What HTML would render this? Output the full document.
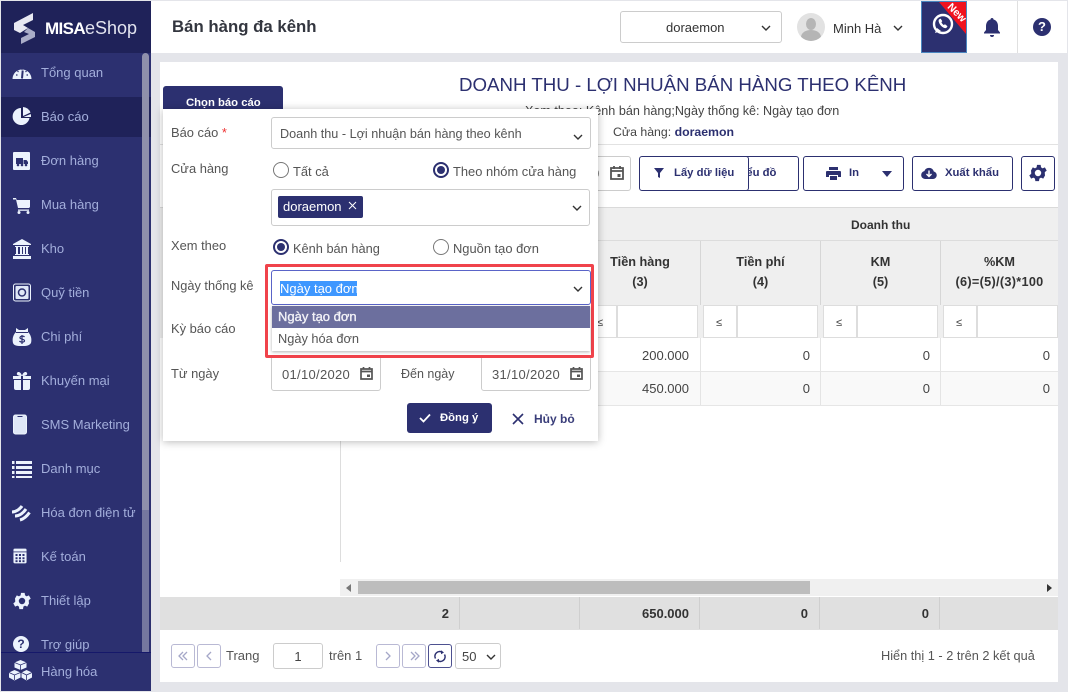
<!DOCTYPE html>
<html><head><meta charset="utf-8">
<style>
*{box-sizing:border-box}
html,body{margin:0;padding:0}
body{width:1068px;height:692px;overflow:hidden;position:relative;background:#e4e5ea;font-family:"Liberation Sans","Noto Sans CJK JP",sans-serif;font-size:13px;color:#444}
.a{position:absolute}
.t{position:absolute;white-space:nowrap;line-height:16px}
.m{position:absolute;left:41px;color:#a3aedb;font-size:13px;line-height:16px;white-space:nowrap}
.ic{position:absolute;left:11px;width:22px;height:22px}
.box{position:absolute;border:1px solid #ccc;border-radius:3px;background:#fff}
.btn{position:absolute;border:1px solid #2c3070;border-radius:3px;background:#fff;color:#2c3070;font-weight:bold;font-size:11.3px;height:35px;line-height:33px;white-space:nowrap}
.hc{position:absolute;top:241px;height:64px;border-right:1px solid #d6d6d6;text-align:center;font-weight:bold;font-size:12.7px;color:#333;line-height:20px;padding-top:11px}
.f{position:absolute;top:305px;height:33px;background:#fff;border:1px solid #ddd}
.n{position:absolute;text-align:right;font-size:13px;color:#444;line-height:16px}
.pg{position:absolute;top:644px;width:24px;height:24px;border:1px solid #b9b9d4;border-radius:3px;background:#fff}
.vl{position:absolute;width:1px;background:#e4e4e4}
.rd{position:absolute;width:16px;height:16px;border-radius:50%;border:1.500px solid #777;background:#fff}
.rd.on{border:2px solid #2c3070}
.rd.on:after{content:"";position:absolute;left:2px;top:2px;width:8px;height:8px;border-radius:50%;background:#2c3070}
.lb{position:absolute;white-space:nowrap;font-size:12.9px;line-height:16px;color:#555}
.dt{letter-spacing:.3px}
</style></head><body>

<!-- header -->
<div class="a" style="left:1px;top:1px;width:1066px;height:52px;background:#fff"></div>
<div class="t" style="left:172px;top:17px;font-size:16.800px;line-height:20px;font-weight:bold;color:#33363f">Bán hàng đa kênh</div>
<div class="box" style="left:620px;top:11px;width:162px;height:32px"></div>
<div class="t" style="left:666px;top:20px;color:#333">doraemon</div>
<svg class="a" style="left:761px;top:25px" width="10" height="6"><path d="M1 1l4 4 4-4" fill="none" stroke="#333" stroke-width="1.400"/></svg>
<div class="a" style="left:797px;top:13px;width:28px;height:28px;border-radius:50%;background:#e2e2e2;overflow:hidden"><div class="a" style="left:9px;top:5px;width:10px;height:12px;border-radius:50%;background:#b5b5b5"></div><div class="a" style="left:4px;top:17px;width:20px;height:14px;border-radius:50%;background:#b5b5b5"></div></div>
<div class="t" style="left:833px;top:21px;color:#333">Minh Hà</div>
<svg class="a" style="left:893px;top:25px" width="10" height="6"><path d="M1 1l4 4 4-4" fill="none" stroke="#333" stroke-width="1.400"/></svg>
<div class="a" style="left:921px;top:1px;width:46px;height:52px;background:#2c3070;border:1px solid #4a86c0;overflow:hidden">
<svg class="a" style="left:0;top:0" width="44" height="50"><path d="M17 0H44V32Z" fill="#f0121e"/>
<circle cx="21" cy="22" r="9" fill="none" stroke="#fff" stroke-width="2.400"/><path d="M17 17.500c-1 1 0 4 2 6.200s4.500 3 5.500 2l1-1.500-2.500-2-1.200.8c-1-.5-2-1.700-2.400-2.700l.9-1.200-1.700-2.500z" fill="#fff"/><path d="M13 31l2-5 4 3z" fill="#fff"/>
<text x="0" y="0" transform="translate(32.500 13) rotate(45)" font-family="Liberation Sans" font-size="10.500" font-weight="bold" fill="#fff" text-anchor="middle">New</text></svg>
</div>
<svg class="a" style="left:983px;top:17px" width="18" height="20"><path d="M9 1c1 0 1.500.7 1.500 1.500C13.500 3.300 15 6 15 9v4l2 2.500v1H1v-1L3 13V9c0-3 1.500-5.700 4.500-6.500C7.500 1.700 8 1 9 1z" fill="#2c3070"/><path d="M7 18h4a2 2 0 0 1-4 0z" fill="#2c3070"/></svg>
<div class="a" style="left:1017px;top:1px;width:1px;height:52px;background:#e0e0e0"></div>
<div class="a" style="left:1033px;top:18px;width:18px;height:18px;border-radius:50%;background:#2c3070;color:#fff;font-weight:bold;font-size:13px;line-height:18px;text-align:center">?</div>

<!-- sidebar -->
<div class="a" style="left:1px;top:1px;width:150px;height:690px;background:#2c3070"></div>
<div class="a" style="left:1px;top:1px;width:150px;height:52px;background:#1f2259"></div>
<div class="a" style="left:1px;top:97px;width:150px;height:40px;background:#1f2259"></div>
<svg class="a" style="left:13px;top:11px" width="126" height="36">
<path d="M1 12L20 2V9L10 14 15 17 7 22 1 19Z" fill="#e8e9f2"/>
<path d="M15 17l7 4v5L8 33v-6l8-4-5-2z" fill="#aaadc8"/>
<text x="32" y="23" font-family="Liberation Sans" font-size="17" font-weight="bold" fill="#fff" letter-spacing="-.6">MISA</text>
<text x="72" y="23" font-family="Liberation Sans" font-size="18" fill="#e3e4ef">eShop</text></svg>

<svg class="ic" style="top:61px" viewBox="0 0 22 22"><path d="M1.500 18a9.500 9.500 0 1 1 19 0z" fill="#ecf3fd"/><path d="M11 17.500l.7-8" stroke="#2c3070" stroke-width="2"/><path d="M5 14h1.500M6.500 10l1 1M11 7.500v1.300M15.500 10l-1 1M15.500 14H17" stroke="#2c3070" stroke-width="1.200"/></svg>
<div class="m" style="top:65px">Tổng quan</div>
<svg class="ic" style="top:105px" viewBox="0 0 22 22"><path d="M10 3a8.500 8.500 0 1 0 8.500 10H10z" fill="#ecf3fd"/><path d="M12 2a8.500 8.500 0 0 1 7.500 5.500L12 11z" fill="#ecf3fd"/><path d="M12.500 12l7.200-3a8 8 0 0 1 .3 3z" fill="#ecf3fd"/></svg>
<div class="m" style="top:109px">Báo cáo</div>
<svg class="ic" style="top:150px" viewBox="0 0 22 22"><rect x="2" y="2" width="17" height="18" rx="1" fill="#ecf3fd"/><path d="M5 8h7v6H5zM12.500 10h3l1.500 2v2h-4.500z" fill="#2c3070"/><circle cx="7" cy="15" r="1.300" fill="#2c3070"/><circle cx="11" cy="15" r="1.300" fill="#2c3070"/><circle cx="15" cy="15" r="1.300" fill="#2c3070"/></svg>
<div class="m" style="top:153px">Đơn hàng</div>
<svg class="ic" style="top:194px" viewBox="0 0 22 22"><path d="M2 4h3l.7 2H19v7l-1 1H7L5 5.500H2z" fill="#ecf3fd"/><path d="M7 15.500h11v1.300H7z" fill="#ecf3fd"/><circle cx="8" cy="18.500" r="1.500" fill="#ecf3fd"/><circle cx="17" cy="18.500" r="1.500" fill="#ecf3fd"/></svg>
<div class="m" style="top:197px">Mua hàng</div>
<svg class="ic" style="top:238px" viewBox="0 0 22 22"><path d="M11 1l9 5v1H2V6zM2 18h18v3H2zM4 16h14v1H4zM4 8h14v1H4zM5 9h2v7H5zM9 9h2v7H9zM12 9h2v7h-2zM15 9h2v7h-2z" fill="#ecf3fd"/></svg>
<div class="m" style="top:241px">Kho</div>
<svg class="ic" style="top:282px" viewBox="0 0 22 22"><rect x="2.500" y="2" width="17" height="17" rx="2" fill="none" stroke="#ecf3fd" stroke-width="1"/><rect x="4.500" y="4" width="13" height="13" rx="1" fill="#dfe7f7"/><circle cx="11" cy="10.500" r="3.500" fill="none" stroke="#2c3070" stroke-width="1.500"/></svg>
<div class="m" style="top:285px">Quỹ tiền</div>
<svg class="ic" style="top:326px" viewBox="0 0 22 22"><path d="M5 2l3 2h6l3-2 0 4c3 3 4 7 3 11-2 3-5 3-9 3s-8 0-9-3C1 13 2 9 5 6z" fill="#ecf3fd"/><path d="M5 6.500h12" stroke="#2c3070"/><path d="M11 9v9M13.500 11c-1-1.500-5-1-4.500 1 .4 1.500 5 1 4.500 3-.4 1.500-4 1.500-5 0" fill="none" stroke="#2c3070" stroke-width="1.200"/></svg>
<div class="m" style="top:329px">Chi phí</div>
<svg class="ic" style="top:370px" viewBox="0 0 22 22"><path d="M3 10h7v10H5a2 2 0 0 1-2-2zM12 10h7v8a2 2 0 0 1-2 2h-5zM2 6h8v3H2zM12 6h8v3h-8z" fill="#ecf3fd"/><path d="M11 6C8 6 5 5 6 3s4-1 5 3c1-4 4-5 5-3s-2 3-5 3z" fill="#ecf3fd"/></svg>
<div class="m" style="top:373px">Khuyến mại</div>
<svg class="ic" style="top:414px" viewBox="0 0 22 22"><rect x="2.500" y="1" width="13" height="19" rx="2" fill="#dfe7f7" stroke="#ecf3fd"/><path d="M6.500 2.500h5" stroke="#2c3070"/></svg>
<div class="m" style="top:417px">SMS Marketing</div>
<svg class="ic" style="top:458px" viewBox="0 0 22 22"><path d="M1 3h2.500v3H1zM5 3h16v3H5zM1 8h2.500v3H1zM5 8h16v3H5zM1 13h2.500v3H1zM5 13h16v3H5zM1 18h2.500v2H1zM5 18h16v2H5z" fill="#ecf3fd"/></svg>
<div class="m" style="top:461px">Danh mục</div>
<svg class="ic" style="top:502px" viewBox="0 0 22 22"><path d="M1 10C5 10 9 7 11 4M4 14C9 14 13 10 15 7M9 18C13 17 16 14 18.500 10.500" fill="none" stroke="#ecf3fd" stroke-width="3"/></svg>
<div class="m" style="top:505px">Hóa đơn điện tử</div>
<svg class="ic" style="top:547px;width:18px;height:18px" viewBox="0 0 22 22"><rect x="3" y="2" width="16" height="18" rx="1.500" fill="#ecf3fd"/><path d="M3 6h16" stroke="#2c3070"/><path d="M5.500 8.500h2.500v2.500H5.500zM9.700 8.500h2.500v2.500H9.700zM14 8.500h2.500v2.500H14zM5.500 12.500h2.500v2.500H5.500zM9.700 12.500h2.500v2.500H9.700zM14 12.500h2.500v2.500H14zM5.500 16.200h2.500v2.300H5.500zM9.700 16.200h2.500v2.300H9.700zM14 16.200h2.500v2.300H14z" fill="#2c3070"/></svg>
<div class="m" style="top:549px">Kế toán</div>
<svg class="ic" style="top:590px" viewBox="0 0 24 24"><path fill="#ecf3fd" d="M19.400 13a7.500 7.500 0 0 0 0-2l2.100-1.600-2-3.500-2.500 1a7.500 7.500 0 0 0-1.700-1l-.4-2.700h-4l-.4 2.700a7.500 7.500 0 0 0-1.700 1l-2.500-1-2 3.500L4.600 11a7.500 7.500 0 0 0 0 2l-2.100 1.600 2 3.500 2.500-1c.5.400 1.100.7 1.700 1l.4 2.700h4l.4-2.700c.6-.3 1.200-.6 1.700-1l2.500 1 2-3.500zM12 15.500a3.500 3.500 0 1 1 0-7 3.500 3.500 0 0 1 0 7z"/></svg>
<div class="m" style="top:593px">Thiết lập</div>
<div class="a" style="left:13px;top:636px;width:16px;height:16px;border-radius:50%;background:#ecf3fd;color:#2c3070;font-weight:bold;font-size:12px;line-height:16px;text-align:center">?</div>
<div class="m" style="top:637px">Trợ giúp</div>
<div class="a" style="left:1px;top:652px;width:150px;height:39px;background:#2c3070;border-top:1px solid #15186a"></div>
<svg class="a" style="left:9px;top:659px" width="23" height="23" viewBox="0 0 23 23"><path d="M11.500 1l6 2.500v5l-6 2.500-6-2.500v-5zM5.500 11l6 2.500v5l-6 3-5.500-3v-5zM17.500 11l5.500 2.500v5l-5.500 3-5-3v-5z" fill="#ecf3fd"/><path d="M5.500 3.500l6 2.500 6-2.500M0 13.500l5.500 2.500 6-2.500M12.500 13.500l5 2.500 5.500-2.500M11.500 6v5M5.500 16v5M17.500 16v5" stroke="#2c3070" stroke-width=".8" fill="none"/></svg>
<div class="m" style="top:664px">Hàng hóa</div>
<div class="a" style="left:142px;top:53px;width:7px;height:599px;background:#8f90ab;border-radius:4px 4px 0 0"></div>
<div class="a" style="left:142px;top:510px;width:7px;height:142px;background:#75779f"></div>

<!-- card -->
<div class="a" style="left:160px;top:62px;width:898px;height:620px;background:#fff"></div>
<div class="a" style="left:163px;top:86px;width:120px;height:30px;background:#2c3070;border-radius:3px"></div>
<div class="t" style="left:186px;top:95px;font-size:11.300px;font-weight:bold;color:#fff">Chọn báo cáo</div>
<div class="t" style="left:459px;top:74px;font-size:18.700px;line-height:22px;color:#2c3070">DOANH THU - LỢI NHUẬN BÁN HÀNG THEO KÊNH</div>
<div class="t" style="left:525px;top:103px;font-size:12.600px;color:#444">Xem theo: Kênh bán hàng;Ngày thống kê: Ngày tạo đơn</div>
<div class="t" style="left:613px;top:124px;font-size:12.300px;color:#444">Cửa hàng: <b style="color:#2c3070">doraemon</b></div>
<div class="a" style="left:160px;top:144px;width:898px;height:1px;background:#e2e2e2"></div>

<!-- toolbar -->
<div class="box" style="left:560px;top:156px;width:71px;height:35px"></div>
<div class="t dt" style="left:592px;top:166px;color:#555">0</div>
<svg class="a" style="left:610px;top:165px" width="14" height="15"><path d="M1 3h12v11H1zM1 6h12M4 1v3M10 1v3" fill="none" stroke="#555" stroke-width="1.800"/><rect x="7.500" y="9" width="3" height="3" fill="#555"/></svg>
<div class="btn" style="left:720px;top:156px;width:79px"></div>
<div class="t" style="left:735px;top:165px;font-size:11.300px;font-weight:bold;color:#2c3070">Biểu đồ</div>
<div class="btn" style="left:639px;top:156px;width:110px;padding-left:34px">Lấy dữ liệu</div>
<svg class="a" style="left:654px;top:168px" width="10" height="11"><path d="M0 0h10L6 5v5L4 9V5z" fill="#2c3070"/></svg>
<div class="btn" style="left:803px;top:156px;width:101px;padding-left:45px">In</div>
<svg class="a" style="left:826px;top:167px" width="15" height="14"><path d="M3 0h9v3H3zM1 4h13a1 1 0 0 1 1 1v5h-3V8H3v2H0V5a1 1 0 0 1 1-1zM4 9h7v4H4z" fill="#2c3070"/></svg>
<svg class="a" style="left:882px;top:171px" width="10" height="6"><path d="M0 0h10L5 6z" fill="#2c3070"/></svg>
<div class="btn" style="left:912px;top:156px;width:101px;padding-left:32px">Xuất khẩu</div>
<svg class="a" style="left:921px;top:167px" width="16" height="12"><path d="M4 12a4 4 0 0 1-.7-7.900A5 5 0 0 1 12.800 4.500 3.800 3.800 0 0 1 12 12z" fill="#2c3070"/><path d="M8 3.500V9M5.500 7L8 9.500 10.500 7" stroke="#fff" stroke-width="1.400" fill="none"/></svg>
<div class="btn" style="left:1021px;top:156px;width:34px"></div>
<svg class="a" style="left:1027px;top:162px" width="22" height="22" viewBox="0 0 24 24"><path fill="#2c3070" d="M19.400 13a7.500 7.500 0 0 0 0-2l2.100-1.600-2-3.500-2.500 1a7.500 7.500 0 0 0-1.700-1l-.4-2.700h-4l-.4 2.700a7.500 7.500 0 0 0-1.700 1l-2.500-1-2 3.500L4.600 11a7.500 7.500 0 0 0 0 2l-2.100 1.600 2 3.500 2.500-1c.5.400 1.100.7 1.700 1l.4 2.700h4l.4-2.700c.6-.3 1.200-.6 1.700-1l2.500 1 2-3.500zM12 15.500a3.500 3.500 0 1 1 0-7 3.500 3.500 0 0 1 0 7z"/></svg>

<!-- table -->
<div class="a" style="left:160px;top:207px;width:898px;height:98px;background:#efefef;border-top:1px solid #dadada"></div>
<div class="a" style="left:580px;top:240px;width:478px;height:1px;background:#dcdcdc"></div>
<div class="t" style="left:851px;top:217px;font-size:12px;font-weight:bold;color:#333">Doanh thu</div>
<div class="hc" style="left:580px;width:121px">Tiền hàng<br>(3)</div>
<div class="hc" style="left:701px;width:120px">Tiền phí<br>(4)</div>
<div class="hc" style="left:821px;width:120px">KM<br>(5)</div>
<div class="hc" style="left:941px;width:117px;border-right:0">%KM<br><span style="letter-spacing:.3px">(6)=(5)/(3)*100</span></div>

<div class="a" style="left:160px;top:305px;width:898px;height:33px;background:#efefef"></div>
<div class="f" style="left:590px;width:27px;border-left:0"></div><div class="f" style="left:617px;width:81px"></div>
<div class="f" style="left:703px;width:34px"></div><div class="f" style="left:737px;width:81px"></div>
<div class="f" style="left:823px;width:34px"></div><div class="f" style="left:857px;width:81px"></div>
<div class="f" style="left:943px;width:34px"></div><div class="f" style="left:977px;width:81px"></div>
<div class="t" style="left:597px;top:315px;font-size:11px">≤</div>
<div class="t" style="left:716px;top:315px;font-size:11px">≤</div>
<div class="t" style="left:836px;top:315px;font-size:11px">≤</div>
<div class="t" style="left:956px;top:315px;font-size:11px">≤</div>

<div class="a" style="left:340px;top:372px;width:718px;height:33px;background:#f9f9f9"></div>
<div class="a" style="left:340px;top:371px;width:718px;height:1px;background:#e6e6e6"></div>
<div class="a" style="left:340px;top:405px;width:718px;height:1px;background:#e6e6e6"></div>
<div class="vl" style="left:340px;top:338px;height:224px;background:#ddd"></div>
<div class="vl" style="left:700px;top:338px;height:67px"></div>
<div class="vl" style="left:820px;top:338px;height:67px"></div>
<div class="vl" style="left:940px;top:338px;height:67px"></div>
<div class="n" style="left:589px;width:100px;top:348px">200.000</div>
<div class="n" style="left:710px;width:100px;top:348px">0</div>
<div class="n" style="left:830px;width:100px;top:348px">0</div>
<div class="n" style="left:950px;width:100px;top:348px">0</div>
<div class="n" style="left:589px;width:100px;top:381px">450.000</div>
<div class="n" style="left:710px;width:100px;top:381px">0</div>
<div class="n" style="left:830px;width:100px;top:381px">0</div>
<div class="n" style="left:950px;width:100px;top:381px">0</div>

<!-- scrollbar -->
<div class="a" style="left:340px;top:579px;width:718px;height:17px;background:#f0f0f0"></div>
<div class="a" style="left:358px;top:581px;width:452px;height:13px;background:#bdbdbd"></div>
<svg class="a" style="left:346px;top:584px" width="5" height="8"><path d="M5 0v8L0 4z" fill="#777"/></svg>
<svg class="a" style="left:1047px;top:584px" width="5" height="8"><path d="M0 0v8l5-4z" fill="#333"/></svg>

<!-- footer -->
<div class="a" style="left:160px;top:597px;width:898px;height:33px;background:#e0e0e0"></div>
<div class="vl" style="left:459px;top:597px;height:32px;background:#cfcfcf"></div>
<div class="vl" style="left:579px;top:597px;height:32px;background:#cfcfcf"></div>
<div class="vl" style="left:699px;top:597px;height:32px;background:#cfcfcf"></div>
<div class="vl" style="left:819px;top:597px;height:32px;background:#cfcfcf"></div>
<div class="vl" style="left:939px;top:597px;height:32px;background:#cfcfcf"></div>
<div class="n" style="left:389px;width:60px;top:606px;font-weight:bold;color:#333">2</div>
<div class="n" style="left:589px;width:100px;top:606px;font-weight:bold;color:#333">650.000</div>
<div class="n" style="left:708px;width:100px;top:606px;font-weight:bold;color:#333">0</div>
<div class="n" style="left:829px;width:100px;top:606px;font-weight:bold;color:#333">0</div>

<!-- pagination -->
<div class="pg" style="left:171px"></div><div class="pg" style="left:197px"></div>
<svg class="a" style="left:178px;top:651px" width="10" height="10"><path d="M5 1L1 5l4 4M9 1L5 5l4 4" fill="none" stroke="#a5a7c8" stroke-width="1.300"/></svg>
<svg class="a" style="left:206px;top:651px" width="6" height="10"><path d="M5 1L1 5l4 4" fill="none" stroke="#a5a7c8" stroke-width="1.300"/></svg>
<div class="t" style="left:226px;top:648px;color:#555">Trang</div>
<div class="box" style="left:273px;top:643px;width:50px;height:26px;text-align:center;line-height:26px;color:#444">1</div>
<div class="t" style="left:329px;top:648px;color:#555">trên 1</div>
<div class="pg" style="left:376px"></div><div class="pg" style="left:402px"></div>
<svg class="a" style="left:385px;top:651px" width="6" height="10"><path d="M1 1l4 4-4 4" fill="none" stroke="#a5a7c8" stroke-width="1.300"/></svg>
<svg class="a" style="left:410px;top:651px" width="10" height="10"><path d="M1 1l4 4-4 4M5 1l4 4-4 4" fill="none" stroke="#a5a7c8" stroke-width="1.300"/></svg>
<div class="pg" style="left:428px;border-color:#4d5190"></div>
<svg class="a" style="left:434px;top:650px" width="12" height="13" viewBox="0 0 12 13"><path d="M1.500 8.500A4.700 4.700 0 0 1 8 2.200M10.500 4.500A4.700 4.700 0 0 1 4 10.800" fill="none" stroke="#2c3070" stroke-width="1.500"/><path d="M7 .3l3 2.200-3 1.800zM5 12.700L2 10.500 5 8.700z" fill="#2c3070"/></svg>
<div class="box" style="left:455px;top:643px;width:46px;height:26px;line-height:26px;padding-left:6px;color:#444">50</div>
<svg class="a" style="left:486px;top:654px" width="10" height="6"><path d="M1 1l4 4 4-4" fill="none" stroke="#333" stroke-width="1.400"/></svg>
<div class="t" style="left:881px;top:648px;font-size:12.750px;color:#555">Hiển thị 1 - 2 trên 2 kết quả</div>

<!-- dialog -->
<div class="a" style="left:163px;top:109px;width:435px;height:332px;background:#fff;box-shadow:0 1px 8px rgba(0,0,0,.28)"></div>
<div class="lb" style="left:171px;top:125px">Báo cáo <span style="color:#e33">*</span></div>
<div class="box" style="left:271px;top:117px;width:320px;height:32px"></div>
<div class="t" style="left:280px;top:126px;font-size:12.650px;color:#555">Doanh thu - Lợi nhuận bán hàng theo kênh</div>
<svg class="a" style="left:573px;top:134px" width="10" height="6"><path d="M1 1l4 4 4-4" fill="none" stroke="#333" stroke-width="1.400"/></svg>
<div class="lb" style="left:171px;top:161px">Cửa hàng</div>
<div class="rd" style="left:273px;top:162px"></div><div class="lb" style="left:293px;top:164px">Tất cả</div>
<div class="rd on" style="left:433px;top:162px"></div><div class="lb" style="left:453px;top:164px">Theo nhóm cửa hàng</div>
<div class="box" style="left:271px;top:189px;width:319px;height:37px"></div>
<div class="a" style="left:278px;top:196px;width:85px;height:22px;background:#2c3070;border-radius:2px"></div>
<div class="t" style="left:283px;top:199px;color:#fff">doraemon</div>
<svg class="a" style="left:348px;top:201px" width="9" height="9"><path d="M1 1l7 7M8 1L1 8" stroke="#fff"/></svg>
<svg class="a" style="left:572px;top:205px" width="10" height="6"><path d="M1 1l4 4 4-4" fill="none" stroke="#333" stroke-width="1.400"/></svg>
<div class="lb" style="left:171px;top:238px">Xem theo</div>
<div class="rd on" style="left:273px;top:239px"></div><div class="lb" style="left:293px;top:241px;font-size:12.800px">Kênh bán hàng</div>
<div class="rd" style="left:433px;top:239px"></div><div class="lb" style="left:453px;top:241px">Nguồn tạo đơn</div>
<div class="lb" style="left:171px;top:278px;font-size:12.800px">Ngày thống kê</div>
<div class="lb" style="left:171px;top:321px">Kỳ báo cáo</div>
<div class="lb" style="left:171px;top:366px">Từ ngày</div>
<div class="box" style="left:271px;top:350px;width:110px;height:41px"></div>
<div class="t dt" style="left:282px;top:367px;color:#555">01/10/2020</div>
<svg class="a" style="left:360px;top:366px" width="13" height="14"><path d="M1 3h11v10H1zM1 5.500h11M3.500 1v2.500M9.500 1v2.500" fill="none" stroke="#555" stroke-width="1.700"/><rect x="7" y="8.500" width="3" height="2.500" fill="#555"/></svg>
<div class="lb" style="left:401px;top:366px;font-size:12.500px">Đến ngày</div>
<div class="box" style="left:481px;top:350px;width:110px;height:41px"></div>
<div class="t dt" style="left:492px;top:367px;color:#555">31/10/2020</div>
<svg class="a" style="left:570px;top:366px" width="13" height="14"><path d="M1 3h11v10H1zM1 5.500h11M3.500 1v2.500M9.500 1v2.500" fill="none" stroke="#555" stroke-width="1.700"/><rect x="7" y="8.500" width="3" height="2.500" fill="#555"/></svg>
<div class="a" style="left:407px;top:403px;width:85px;height:30px;background:#2c3070;border-radius:3px"></div>
<svg class="a" style="left:419px;top:413px" width="12" height="10"><path d="M1 5l3.500 3.500L11 1.500" fill="none" stroke="#fff" stroke-width="1.800"/></svg>
<div class="t" style="left:440px;top:410px;font-size:11.300px;font-weight:bold;color:#fff">Đồng ý</div>
<svg class="a" style="left:512px;top:413px" width="12" height="12"><path d="M1 1l10 10M11 1L1 11" stroke="#2c3070" stroke-width="1.600"/></svg>
<div class="t" style="left:534px;top:411px;font-size:12px;font-weight:bold;color:#3a3e7a">Hủy bỏ</div>

<!-- highlighted dropdown -->
<div class="a" style="left:265px;top:264px;width:329px;height:94px;background:#fff;border:3px solid #f0434b;border-radius:2px"></div>
<div class="a" style="left:271px;top:270px;width:320px;height:35px;background:#fff;border:1px solid #5a64c8;border-radius:3px"></div>
<div class="a" style="left:280px;top:281px;width:77px;height:15px;background:#3e97ff"></div>
<div class="t" style="left:280px;top:281px;color:#fff">Ngày tạo đơn</div>
<svg class="a" style="left:573px;top:286px" width="10" height="6"><path d="M1 1l4 4 4-4" fill="none" stroke="#333" stroke-width="1.400"/></svg>
<div class="a" style="left:272px;top:306px;width:318px;height:45px;background:#fff;box-shadow:0 1px 3px rgba(0,0,0,.3)"></div>
<div class="a" style="left:272px;top:306px;width:318px;height:22px;background:#6c6f9e"></div>
<div class="t" style="left:278px;top:309px;color:#f2f2f7;-webkit-text-stroke:.35px #f2f2f7">Ngày tạo đơn</div>
<div class="t" style="left:278px;top:331px;font-size:12.800px;color:#555">Ngày hóa đơn</div>

</body></html>
